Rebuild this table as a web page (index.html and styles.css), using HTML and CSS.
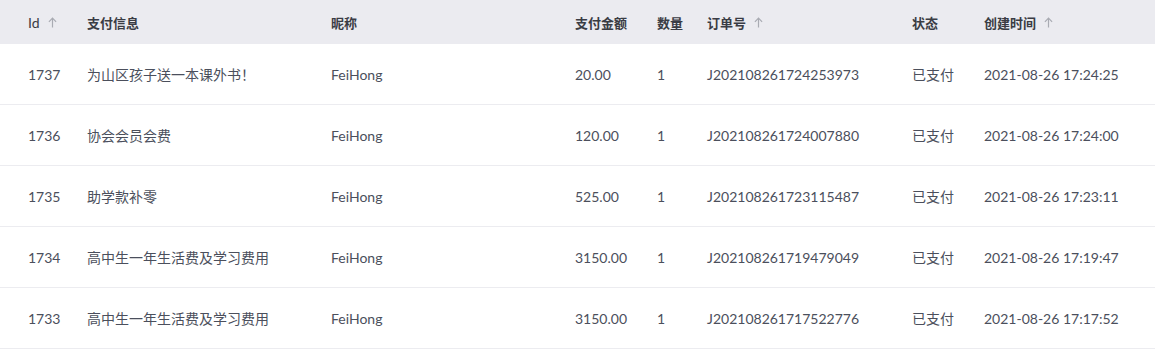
FILE: index.html
```html
<!DOCTYPE html>
<html>
<head>
<meta charset="utf-8">
<link rel="stylesheet" href="styles.css">
</head>
<body>
<div class="table">
  <div class="row head">
    <div class="cell"><span class="latin">Id</span><svg class="sort" viewBox="0 0 9 11" width="9" height="11"><path d="M4.5 10.5V1.2M0.9 4.8L4.5 1.2L8.1 4.8" fill="none" stroke="currentColor" stroke-width="1.2"/></svg></div>
    <div class="cell">支付信息</div>
    <div class="cell">昵称</div>
    <div class="cell">支付金额</div>
    <div class="cell">数量</div>
    <div class="cell">订单号<svg class="sort" viewBox="0 0 9 11" width="9" height="11"><path d="M4.5 10.5V1.2M0.9 4.8L4.5 1.2L8.1 4.8" fill="none" stroke="currentColor" stroke-width="1.2"/></svg></div>
    <div class="cell">状态</div>
    <div class="cell">创建时间<svg class="sort" viewBox="0 0 9 11" width="9" height="11"><path d="M4.5 10.5V1.2M0.9 4.8L4.5 1.2L8.1 4.8" fill="none" stroke="currentColor" stroke-width="1.2"/></svg></div>
  </div>
  <div class="row">
    <div class="cell">1737</div><div class="cell">为山区孩子送一本课外书！</div><div class="cell">FeiHong</div><div class="cell">20.00</div><div class="cell">1</div><div class="cell">J202108261724253973</div><div class="cell">已支付</div><div class="cell">2021-08-26 17:24:25</div>
  </div>
  <div class="row">
    <div class="cell">1736</div><div class="cell">协会会员会费</div><div class="cell">FeiHong</div><div class="cell">120.00</div><div class="cell">1</div><div class="cell">J202108261724007880</div><div class="cell">已支付</div><div class="cell">2021-08-26 17:24:00</div>
  </div>
  <div class="row">
    <div class="cell">1735</div><div class="cell">助学款补零</div><div class="cell">FeiHong</div><div class="cell">525.00</div><div class="cell">1</div><div class="cell">J202108261723115487</div><div class="cell">已支付</div><div class="cell">2021-08-26 17:23:11</div>
  </div>
  <div class="row">
    <div class="cell">1734</div><div class="cell">高中生一年生活费及学习费用</div><div class="cell">FeiHong</div><div class="cell">3150.00</div><div class="cell">1</div><div class="cell">J202108261719479049</div><div class="cell">已支付</div><div class="cell">2021-08-26 17:19:47</div>
  </div>
  <div class="row">
    <div class="cell">1733</div><div class="cell">高中生一年生活费及学习费用</div><div class="cell">FeiHong</div><div class="cell">3150.00</div><div class="cell">1</div><div class="cell">J202108261717522776</div><div class="cell">已支付</div><div class="cell">2021-08-26 17:17:52</div>
  </div>
</div>
</body>
</html>
```
FILE: styles.css
```css
html, body {
  margin: 0;
  padding: 0;
  background: #ffffff;
}
body {
  font-family: Lato, "Noto Sans CJK SC", sans-serif;
  font-size: 14px;
  color: #4b4f5c;
}
.table {
  width: 1155px;
}
.row {
  display: grid;
  grid-template-columns: 59px 244px 244px 82px 50px 205px 72px 1fr;
  padding-left: 28px;
  height: 60px;
  align-items: center;
  border-bottom: 1px solid #ececf0;
}
.row.head {
  height: 44px;
  border-bottom: none;
  background: #ebebf0;
  font-size: 13px;
  font-weight: bold;
  color: #3a3c44;
}
.latin {
  font-weight: normal;
  font-size: 14px;
}
.cell {
  display: flex;
  align-items: center;
  white-space: nowrap;
}
.sort {
  margin-left: 8px;
  color: #a9abb3;
}
```
